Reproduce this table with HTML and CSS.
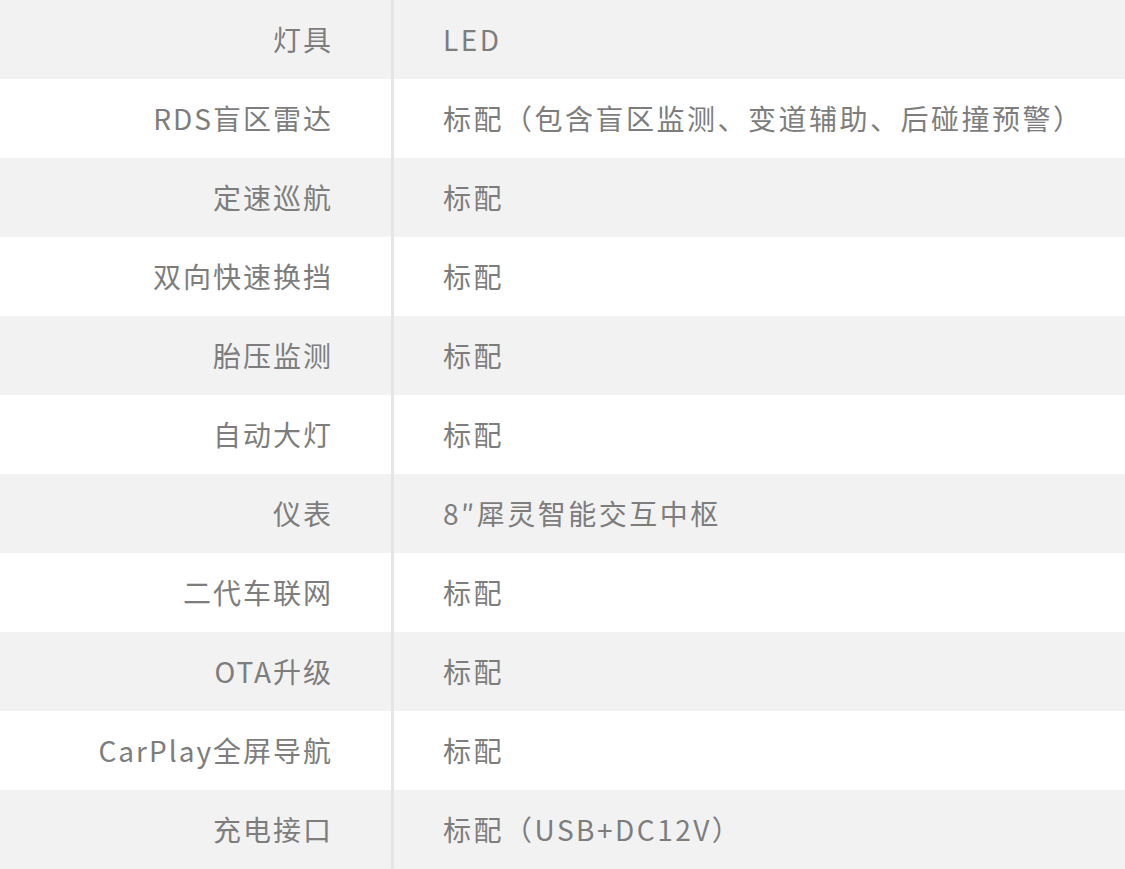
FILE: index.html
```html
<!DOCTYPE html>
<html lang="zh">
<head>
<meta charset="utf-8">
<link rel="stylesheet" href="styles.css">
</head>
<body>
<div class="spec">
  <div class="row"><div class="k">灯具</div><div class="v">LED</div></div>
  <div class="row"><div class="k">RDS盲区雷达</div><div class="v">标配（包含盲区监测、变道辅助、后碰撞预警）</div></div>
  <div class="row"><div class="k">定速巡航</div><div class="v">标配</div></div>
  <div class="row"><div class="k">双向快速换挡</div><div class="v">标配</div></div>
  <div class="row"><div class="k">胎压监测</div><div class="v">标配</div></div>
  <div class="row"><div class="k">自动大灯</div><div class="v">标配</div></div>
  <div class="row"><div class="k">仪表</div><div class="v">8″犀灵智能交互中枢</div></div>
  <div class="row"><div class="k">二代车联网</div><div class="v">标配</div></div>
  <div class="row"><div class="k">OTA升级</div><div class="v">标配</div></div>
  <div class="row"><div class="k">CarPlay全屏导航</div><div class="v">标配</div></div>
  <div class="row"><div class="k">充电接口</div><div class="v">标配（USB+DC12V）</div></div>
</div>
</body>
</html>
```
FILE: styles.css
```css
html, body {
  margin: 0;
  padding: 0;
  background: #ffffff;
}
body {
  font-family: "Noto Sans CJK SC", "Noto Sans", sans-serif;
  color: #7d7d7d;
}
.spec {
  display: flex;
  flex-direction: column;
  width: 1125px;
}
.row {
  display: grid;
  grid-template-columns: 394px 1fr;
  height: 79px;
  background: #ffffff;
}
.row:nth-child(odd) {
  background: #f2f2f2;
}
.k, .v {
  display: flex;
  align-items: center;
  font-size: 28px;
  white-space: nowrap;
  padding-bottom: 2px;
}
.k {
  justify-content: flex-end;
  padding-right: 58px;
  letter-spacing: 2px;
  border-right: 3px solid #e5e5e5;
}
.v {
  padding-left: 49px;
  letter-spacing: 2.5px;
}
```
